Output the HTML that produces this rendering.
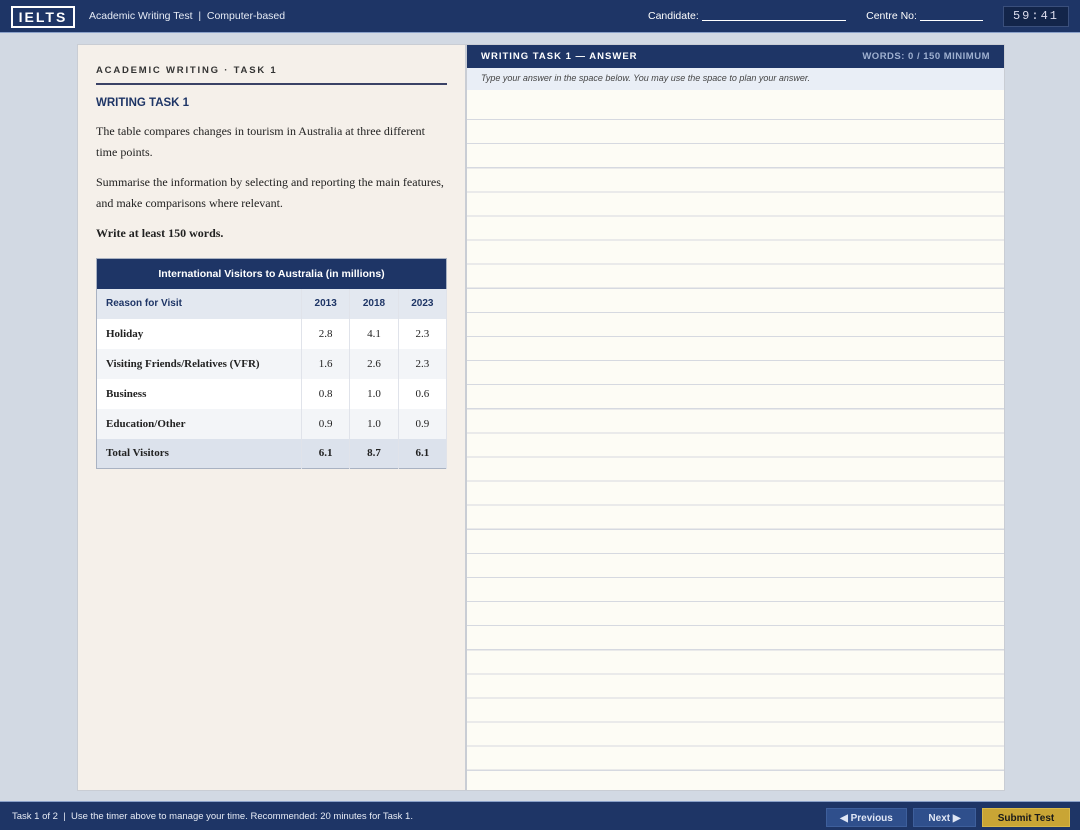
<!DOCTYPE html>
<html><head><style>
*{margin:0;padding:0;box-sizing:border-box}
body{width:1080px;height:830px;background:#d2d9e3;font-family:"Liberation Sans",sans-serif;position:relative;overflow:hidden}
.top{position:absolute;left:0;top:0;width:1080px;height:33px;background:#1e3566;border-bottom:1px solid #8aa0c8;color:#fff}
.logo{position:absolute;left:11px;top:6px;width:64px;height:22px;border:2px solid #fff;font-weight:bold;font-size:14px;letter-spacing:2px;text-align:center;line-height:18px}
.t1{position:absolute;left:89px;top:10px;font-size:10.5px;color:#e6ebf5}
.cand{position:absolute;left:648px;top:10px;font-size:10.5px}
.cl{display:inline-block;border-bottom:1px solid #fff;vertical-align:-2px}
.timer{position:absolute;left:1003px;top:6px;width:66px;height:21px;background:#13254a;border:1px solid #3a4f7c;font-family:"Liberation Mono",monospace;font-size:12px;color:#dde;text-align:center;line-height:19px;letter-spacing:2px}
.left{position:absolute;left:77px;top:44px;width:389px;height:747px;background:#f5f0ea;border:1px solid #c9cdd4}
.h1{position:absolute;left:18px;top:20px;font-size:9.5px;font-weight:bold;letter-spacing:1.8px;color:#333}
.rule{position:absolute;left:18px;top:38px;width:351px;height:2px;background:#3a4266}
.h2{position:absolute;left:18px;top:52px;font-size:11.5px;font-weight:bold;color:#1e3566}
.p{position:absolute;left:18px;font-family:"Liberation Serif",serif;font-size:12px;color:#222;line-height:21px;width:370px;white-space:nowrap}
table{position:absolute;left:18px;top:213px;width:351px;border-collapse:collapse;border:1px solid #a9b2c2}
th.cap{background:#1e3566;color:#fff;font-size:10.5px;height:30px}
td{height:30px;font-family:"Liberation Serif",serif;font-size:11px;border-right:1px solid #e0e3ea;text-align:center;color:#222}
td:first-child{text-align:left;padding-left:9px;font-weight:bold;width:205px}
tr.hd td{background:#e3e8f0;font-family:"Liberation Sans",sans-serif;font-weight:bold;color:#1e3566;font-size:10px}
tr.w td{background:#fff}tr.g td{background:#f3f5f8}
tr.tot td{background:#dce2ec;font-weight:bold}
.right{position:absolute;left:466px;top:44px;width:539px;height:747px;background:#fdfcf5;border:1px solid #c9cdd4}
.rh{height:23px;background:#1e3566;color:#fff;font-size:9.5px;font-weight:bold;letter-spacing:1px;line-height:23px;padding:0 14px}
.rh span{float:right;color:#9fb0d0;letter-spacing:.5px}
.ins{height:22px;background:#e9eef6;font-size:9px;font-style:italic;color:#444;line-height:21px;padding-left:14px}
.lines{position:absolute;left:0;top:51px;right:0;bottom:0;background:repeating-linear-gradient(to bottom,#fdfcf5 0,#fdfcf5 23px,#d6d9e0 23px,#d6d9e0 24.1px)}
.bot{position:absolute;left:0;top:801px;width:1080px;height:29px;background:#1e3566;border-top:1px solid #8aa0c8}
.bt{position:absolute;left:12px;top:9px;font-size:9.5px;color:#e6ebf5}
.btn{position:absolute;top:6px;height:19px;font-size:10px;font-weight:bold;text-align:center;line-height:19px;color:#dfe6f5;background:#2f4f8c;border:1px solid #3e5f9c}
</style></head><body>
<div class="top"><div class="logo">IELTS</div><div class="t1">Academic Writing Test &nbsp;|&nbsp; Computer-based</div>
<div class="cand">Candidate: <span class="cl" style="width:144px"></span>&nbsp;&nbsp;&nbsp;&nbsp;&nbsp;&nbsp; Centre No: <span class="cl" style="width:63px"></span></div>
<div class="timer">59:41</div></div>
<div class="left">
<div class="h1">ACADEMIC WRITING · TASK 1</div><div class="rule"></div>
<div class="h2">WRITING TASK 1</div>
<div class="p" style="top:76px">The table compares changes in tourism in Australia at three different<br>time points.</div>
<div class="p" style="top:127px">Summarise the information by selecting and reporting the main features,<br>and make comparisons where relevant.</div>
<div class="p" style="top:178px;font-weight:bold">Write at least 150 words.</div>
<table>
<tr><th class="cap" colspan="4">International Visitors to Australia (in millions)</th></tr>
<tr class="hd"><td>Reason for Visit</td><td>2013</td><td>2018</td><td>2023</td></tr>
<tr class="w"><td>Holiday</td><td>2.8</td><td>4.1</td><td>2.3</td></tr>
<tr class="g"><td>Visiting Friends/Relatives (VFR)</td><td>1.6</td><td>2.6</td><td>2.3</td></tr>
<tr class="w"><td>Business</td><td>0.8</td><td>1.0</td><td>0.6</td></tr>
<tr class="g"><td>Education/Other</td><td>0.9</td><td>1.0</td><td>0.9</td></tr>
<tr class="tot"><td>Total Visitors</td><td>6.1</td><td>8.7</td><td>6.1</td></tr>
</table></div>
<div class="right"><div class="rh">WRITING TASK 1 — ANSWER<span>WORDS: 0 / 150 MINIMUM</span></div>
<div class="ins">Type your answer in the space below. You may use the space to plan your answer.</div>
<div class="lines"></div></div>
<div class="bot"><div class="bt">Task 1 of 2 &nbsp;|&nbsp; Use the timer above to manage your time. Recommended: 20 minutes for Task 1.</div>
<div class="btn" style="left:826px;width:81px">◀ Previous</div>
<div class="btn" style="left:913px;width:63px">Next ▶</div>
<div class="btn" style="left:982px;width:88px;background:#c9a535;border-color:#d8b848;color:#1a1a1a">Submit Test</div></div>
</body></html>
